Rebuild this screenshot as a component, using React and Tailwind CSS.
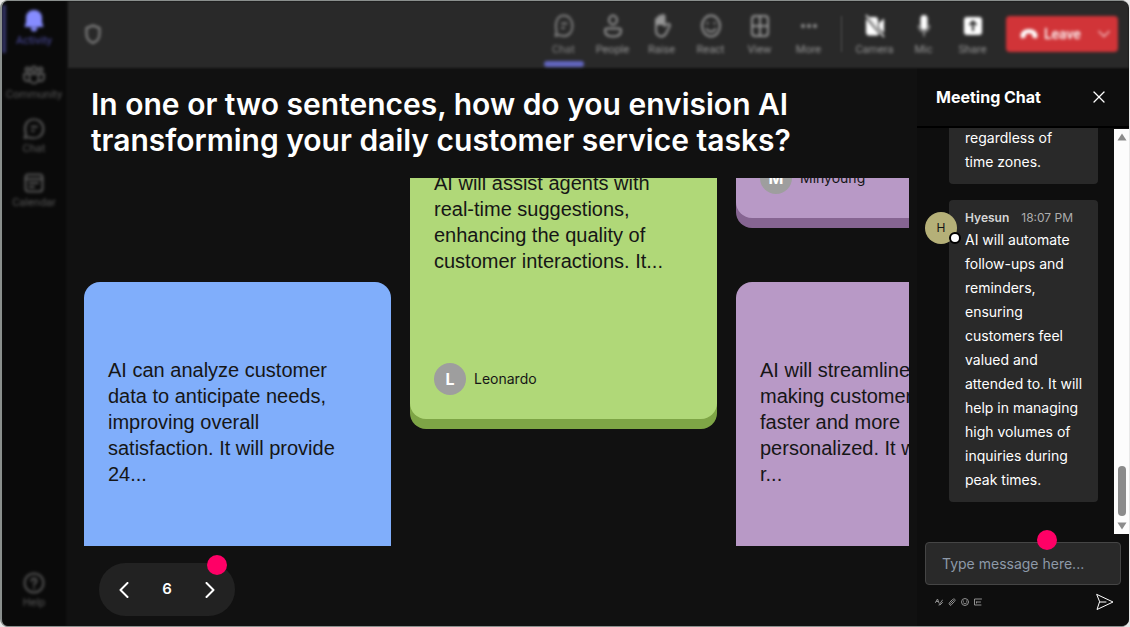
import React, { useState } from 'react';
import { ChevronDown, X } from 'lucide-react';

const answers = [
  {
    id: 'left',
    className: 'pt-[104px]',
    cards: [
      {
        name: 'Daniel',
        text: 'AI can analyze customer data to anticipate needs, improving overall satisfaction. It will provide 24...',
        color: 'bg-[#80aefb] shadow-[0_10px_0_#4f7fd0]',
      },
    ],
  },
  {
    id: 'middle',
    className: '-mt-24',
    cards: [
      {
        name: 'Leonardo',
        text: 'AI will assist agents with real-time suggestions, enhancing the quality of customer interactions. It...',
        color: 'bg-[#b0d878] shadow-[0_10px_0_#7ea546]',
      },
    ],
  },
  {
    id: 'right',
    className: '-mt-[297px]',
    cards: [
      {
        name: 'Minyoung',
        text: 'AI will take over\nrepetitive work.',
        color: 'bg-[#b899c6] shadow-[0_10px_0_#866592]',
      },
      {
        name: 'Sofia',
        text: 'AI will streamline tasks,\nmaking customer service\nfaster and more\npersonalized. It will\nr...',
        color: 'bg-[#b899c6] shadow-[0_10px_0_#866592]',
      },
    ],
  },
];

const iconProps = {
  fill: 'none',
  stroke: 'currentColor',
  strokeWidth: 2,
  strokeLinecap: 'round',
  strokeLinejoin: 'round',
  'aria-hidden': true,
};

const BellIcon = () => (
  <svg viewBox="0 0 20 22" className="h-[22px] w-5" fill="currentColor" aria-hidden="true">
    <path d="M10 0C5.500 0 2 3.200 2 7.500V12L.500 17H19.500L18 12V7.500C18 3.200 14.500 0 10 0Z" />
    <path d="M6.500 17.500H13.500C13 20.500 12 21.500 10 21.500C8 21.500 7 20.500 6.500 17.500Z" />
  </svg>
);

const CommunityIcon = () => (
  <svg viewBox="0 0 22 20" className="h-5 w-[22px]" {...iconProps}>
    <circle cx="11" cy="4" r="2.500" />
    <circle cx="4.500" cy="4.500" r="2" />
    <circle cx="17.500" cy="4.500" r="2" />
    <path d="M6.500 9H15.500V14C15.500 19.500 6.500 19.500 6.500 14ZM6 9H1V12.500C1 15 3 16.500 5.500 16M16 9H21V12.500C21 15 19 16.500 16.500 16" />
  </svg>
);

const BubbleIcon = ({ className }) => (
  <svg viewBox="0 0 20 24" preserveAspectRatio="none" className={className} {...iconProps}>
    <path d="M10 1.500C15 1.500 18.500 6 18.500 12S15 22 10 22C8 22 6.500 21.600 5 20.800L1.500 22L2.600 17.500C.500 9 3 1.500 10 1.500Z" />
    <path d="M8 9.500H12.500M8 14H10" />
  </svg>
);

const CalendarIcon = () => (
  <svg viewBox="0 0 20 20" className="h-5 w-5" {...iconProps}>
    <rect x="1.500" y="1.500" width="17" height="17" rx="3" />
    <path d="M1.500 6H18.500M5.500 10H14M5.500 14H10" />
  </svg>
);

const HelpIcon = () => (
  <svg viewBox="0 0 22 22" className="h-[22px] w-[22px]" {...iconProps}>
    <circle cx="11" cy="11" r="9.500" />
    <path d="M8.500 9C8.500 5.500 13.500 5.500 13.500 9C13.500 11 11 11 11 13M11 16V16.200" />
  </svg>
);

const PersonIcon = () => (
  <svg viewBox="0 0 20 24" className="h-6 w-5" {...iconProps}>
    <ellipse cx="10" cy="6" rx="4" ry="4.500" />
    <path d="M4 14.500H16C17.500 14.500 18 15.500 18 16.500C18 20.500 14.500 22.500 10 22.500S2 20.500 2 16.500C2 15.500 2.500 14.500 4 14.500Z" />
  </svg>
);

const HandIcon = () => (
  <svg viewBox="0 0 20 24" className="h-6 w-5" {...iconProps}>
    <path d="M4 13V6C4 4 6.500 4 6.500 6V10V3.500C6.500 1.500 9.500 1.500 9.500 3.500V10V2.500C9.500 .500 12.500 .500 12.500 2.500V12L15.500 10C17 9 18.500 11 17.500 12.500L14 19.500C11.500 24 4 23.500 4 16Z" />
    <path d="M4.500 5L12 3V10H4.500Z" fill="currentColor" />
  </svg>
);

const SmileIcon = () => (
  <svg viewBox="0 0 20 24" className="h-6 w-5" {...iconProps}>
    <ellipse cx="10" cy="12" rx="9" ry="10.500" />
    <path d="M6.500 9V9.500M13.500 9V9.500M5.500 15C8 18.500 12 18.500 14.500 15" />
  </svg>
);

const GridIcon = () => (
  <svg viewBox="0 0 20 24" className="h-6 w-5" {...iconProps}>
    <rect x="2" y="2" width="16" height="20" rx="3" />
    <path d="M10 2V22M2 12H18" />
  </svg>
);

const DotsIcon = () => (
  <svg viewBox="0 0 20 24" className="h-6 w-5" fill="currentColor" aria-hidden="true">
    <circle cx="4" cy="12" r="2" />
    <circle cx="10" cy="12" r="2" />
    <circle cx="16" cy="12" r="2" />
  </svg>
);

const CameraIcon = () => (
  <svg viewBox="0 0 20 24" className="h-6 w-5 text-white" fill="currentColor" aria-hidden="true">
    <path d="M4 3H10C12 3 13 4 13 6V14ZM1 4.500L14 20C13.500 21 12.500 21.500 11 21.500H4C2 21.500 1 20 1 18ZM14 9L19 4.500V19L14 14Z" />
    <path d="M1 1L19 23" stroke="currentColor" strokeWidth="1.500" />
  </svg>
);

const MicIcon = () => (
  <svg viewBox="0 0 20 24" className="h-6 w-5 text-white" fill="currentColor" aria-hidden="true">
    <rect x="6.500" y="1" width="7" height="15" rx="3.500" />
    <path d="M4.500 11C4.500 20 15.500 20 15.500 11M10 18V22.500" fill="none" stroke="#a3a3a3" strokeWidth="1.500" />
  </svg>
);

const ShareIcon = () => (
  <svg viewBox="0 0 20 24" className="h-6 w-5 text-white" aria-hidden="true">
    <rect x="1" y="3" width="18" height="18" rx="3" fill="currentColor" />
    <path d="M10 17V8M6.500 11L10 7.500L13.500 11" fill="none" stroke="#292929" strokeWidth="2" />
  </svg>
);

const sideItems = [
  { label: 'Activity', icon: <BellIcon /> },
  { label: 'Community', icon: <CommunityIcon /> },
  { label: 'Chat', icon: <BubbleIcon className="h-[22px] w-[22px]" /> },
  { label: 'Calendar', icon: <CalendarIcon /> },
];

const meetingItems = [
  { label: 'Chat', icon: <BubbleIcon className="h-6 w-5" /> },
  { label: 'People', icon: <PersonIcon /> },
  { label: 'Raise', icon: <HandIcon /> },
  { label: 'React', icon: <SmileIcon /> },
  { label: 'View', icon: <GridIcon /> },
  { label: 'More', icon: <DotsIcon /> },
];

const deviceItems = [
  { label: 'Camera', icon: <CameraIcon /> },
  { label: 'Mic', icon: <MicIcon /> },
  { label: 'Share', icon: <ShareIcon /> },
];

const SideItem = ({ label, icon, active }) => (
  <button
    type="button"
    className={`flex h-12 w-full flex-col items-center border-l-4 pt-1 pr-1 text-[11px] leading-4 blur-[1px] ${
      active ? 'border-[#343468] text-[#4c4ca0]' : 'border-transparent text-[#585858]'
    }`}
  >
    <span className={`flex h-6 items-center ${active ? 'text-[#868cff]' : ''}`}>{icon}</span>
    {label}
  </button>
);

const Sidebar = () => (
  <nav
    aria-label="Main"
    className="flex w-16 shrink-0 flex-col justify-between bg-[#0a0a0a] pt-1 pb-[11px] font-['Roboto',sans-serif] blur-[1px]"
  >
    <div className="flex flex-col gap-1.5">
      {sideItems.map((item, index) => (
        <SideItem key={item.label} {...item} active={index === 0} />
      ))}
    </div>
    <SideItem label="Help" icon={<HelpIcon />} />
  </nav>
);

const ToolButton = ({ label, icon, active }) => (
  <button
    type="button"
    className={`flex w-[49px] flex-col items-center pt-[13px] text-[11px] leading-4 blur-[1px] ${
      active ? 'text-[#808080]' : 'text-[#969696]'
    }`}
  >
    {icon}
    <span className="mt-1">{label}</span>
    <span className={`mt-auto h-1.5 w-10 rounded-sm ${active ? 'bg-[#6266c0]' : ''}`} />
  </button>
);

const TopBar = () => (
  <header className="flex h-[67px] shrink-0 items-center justify-between bg-[#292929] pr-[11px] pb-px pl-[17px] font-['Roboto',sans-serif] blur-[1px]">
    <svg viewBox="0 0 16 20" className="h-5 w-4 text-[#888888] blur-[1px]" {...iconProps}>
      <path d="M8 1.500L14.500 4V10C14.500 14.500 12 17.500 8 19C4 17.500 1.500 14.500 1.500 10V4Z" />
    </svg>
    <div className="flex h-full items-center">
      <div className="flex h-full">
        {meetingItems.map((item, index) => (
          <ToolButton key={item.label} {...item} active={index === 0} />
        ))}
      </div>
      <span className="mx-2 h-9 w-px bg-[#4c4c4c]" />
      <div className="flex h-full">
        {deviceItems.map((item) => (
          <ToolButton key={item.label} {...item} />
        ))}
      </div>
      <button
        type="button"
        className="ml-[9px] flex h-9 w-28 items-center rounded bg-[#d13438] pr-1 pl-3.5 text-sm font-medium text-white blur-[1px]"
      >
        <svg viewBox="0 0 18 12" className="mr-1.5 h-3 w-[18px]" fill="currentColor" aria-hidden="true">
          <path d="M9 1C4 1 0 4 .500 8.500L1.500 10.500L5.500 9.500L6 6C8 5.300 10 5.300 12 6L12.500 9.500L16.500 10.500L17.500 8.500C18 4 14 1 9 1Z" />
        </svg>
        Leave
        <ChevronDown className="ml-auto h-5 w-5 text-[#f0b8ba]" />
      </button>
    </div>
  </header>
);

const AnswerCard = ({ name, text, color }) => (
  <article className={`flex h-[337px] flex-col rounded-2xl px-6 pb-6 text-[#161616] ${color}`}>
    <p className="flex flex-1 items-center pb-0.5 font-['Liberation_Sans',sans-serif] text-xl leading-[26px] whitespace-pre-line">
      {text}
    </p>
    <div className="flex items-center gap-2 text-sm">
      <span className="flex h-8 w-8 items-center justify-center rounded-full bg-[#9e9e9e] text-base font-bold text-white">
        {name[0]}
      </span>
      {name}
    </div>
  </article>
);

const Pager = () => {
  const [page, setPage] = useState(6);

  return (
    <div className="relative mt-[17px] mb-2.5 ml-[31px] flex h-[53px] w-[136px] items-center justify-between rounded-full bg-[#222222] px-5 text-white">
      <button type="button" aria-label="Previous" onClick={() => setPage((prev) => Math.max(1, prev - 1))}>
        <svg viewBox="0 0 10 16" className="h-4 w-2.5" {...iconProps}>
          <path d="M8.500 1L1.500 8L8.500 15" />
        </svg>
      </button>
      <span className="text-[15px] font-semibold">{page}</span>
      <button type="button" aria-label="Next" onClick={() => setPage((prev) => prev + 1)}>
        <svg viewBox="0 0 10 16" className="h-4 w-2.5" {...iconProps}>
          <path d="M1.500 1L8.500 8L1.500 15" />
        </svg>
      </button>
      <span className="absolute -top-2 right-2 h-5 w-5 rounded-full bg-[#ff0066]" />
    </div>
  );
};

const Board = () => (
  <main className="flex min-w-0 flex-1 flex-col pt-[18px]">
    <h1 className="mb-5 pl-[23px] text-[30px] leading-9 font-semibold text-white">
      In one or two sentences, how do you envision AI
      <br />
      transforming your daily customer service tasks?
    </h1>
    <div className="mr-2 ml-4 flex min-h-0 flex-1 items-start gap-[19px] overflow-hidden">
      {answers.map((column) => (
        <div key={column.id} className={`flex w-[307px] shrink-0 flex-col gap-16 ${column.className}`}>
          {column.cards.map((card) => (
            <AnswerCard key={card.name} {...card} />
          ))}
        </div>
      ))}
    </div>
    <Pager />
  </main>
);

const ScrollTrack = () => (
  <div className="mt-px flex w-[15px] shrink-0 flex-col items-center bg-[#fcfcfc] py-1" aria-hidden="true">
    <svg viewBox="0 0 10 8" className="h-2 w-2.5" fill="#8b8b8b">
      <path d="M5 0.500L9.500 7.500H.500Z" />
    </svg>
    <span className="mt-auto mb-1.5 h-[50px] w-2 rounded-full bg-[#8b8b8b]" />
    <svg viewBox="0 0 10 8" className="h-2 w-2.5" fill="#8b8b8b">
      <path d="M5 7.500L9.500 0.500H.500Z" />
    </svg>
  </div>
);

const Message = ({ name, time, text }) => (
  <li className="flex items-start">
    <span className="relative z-10 mt-3 -mr-2 flex h-8 w-8 shrink-0 items-center justify-center rounded-full bg-[#b5b078] text-xs text-[#161616]">
      {name[0]}
      <span className="absolute -right-1 bottom-0 h-3 w-3 rounded-full border-2 border-black bg-white" />
    </span>
    <div className="min-w-0 flex-1 rounded bg-[#292929] pt-2 pr-3 pb-2.5 pl-4">
      <div className="flex gap-3 text-xs leading-5 whitespace-nowrap text-[#adadad]">
        <span className="font-semibold text-[#d6d6d6]">{name}</span>
        <time>{time}</time>
      </div>
      <p className="text-sm leading-6 whitespace-pre-line text-white">{text}</p>
    </div>
  </li>
);

const ChatPanel = () => {
  const [draft, setDraft] = useState('');

  return (
    <aside className="flex w-[212px] shrink-0 flex-col bg-[#0e0e0e] text-white">
      <div className="flex h-[60px] shrink-0 items-center justify-between border-b-2 border-black pr-5 pl-[19px]">
        <h2 className="text-base font-bold">Meeting Chat</h2>
        <button type="button" aria-label="Close chat">
          <X className="h-5 w-5" strokeWidth={1.5} />
        </button>
      </div>
      <div className="flex min-h-0 flex-1">
        <ul className="flex min-w-0 flex-1 flex-col justify-end gap-4 overflow-hidden pr-4 pb-8 pl-2">
          <Message name="Minji" time="18:05 PM" text={'AI will help us\nregardless of\ntime zones.'} />
          <Message
            name="Hyesun"
            time="18:07 PM"
            text="AI will automate follow-ups and reminders, ensuring customers feel valued and attended to. It will help in managing high volumes of inquiries during peak times."
          />
        </ul>
        <ScrollTrack />
      </div>
      <form className="shrink-0 px-2 pt-2 pb-[15px]" onSubmit={(event) => event.preventDefault()}>
        <div className="relative">
          <input
            type="text"
            aria-label="Message"
            placeholder="Type message here..."
            value={draft}
            onChange={(event) => setDraft(event.target.value)}
            className="block h-[43px] w-full rounded border border-[#454545] bg-[#292929] px-4 text-sm text-white placeholder:text-[#8d99a8]"
          />
          <span className="absolute -top-3 right-16 h-5 w-5 rounded-full bg-[#ff0066]" />
        </div>
        <div className="mt-2 flex items-center justify-between pr-[7px] pl-2.5">
          <div className="flex gap-[5px] text-[#909090]">
            <button type="button" aria-label="Format">
              <svg viewBox="0 0 16 16" className="h-2 w-2" {...iconProps}>
                <path d="M1 9L5 2L8 10M3 7H6M8 14L15 4M10 14L15 9" />
              </svg>
            </button>
            <button type="button" aria-label="Attach">
              <svg viewBox="0 0 16 16" className="h-2 w-2" {...iconProps}>
                <path d="M5 11L11 5M4 14C1 12 2 10 4 8L9 3C13 0 16 4 13 7L8 12C7 14 5 15 4 14Z" />
              </svg>
            </button>
            <button type="button" aria-label="Emoji">
              <svg viewBox="0 0 16 16" className="h-2 w-2" {...iconProps}>
                <circle cx="8" cy="8" r="7" />
                <path d="M5 6V6.500M11 6V6.500M5 10C7 12 9 12 11 10" />
              </svg>
            </button>
            <button type="button" aria-label="GIF">
              <svg viewBox="0 0 16 16" className="h-2 w-2" {...iconProps}>
                <path d="M15 2H1V14H14M5 8H13M5 8V10" />
              </svg>
            </button>
          </div>
          <button type="submit" aria-label="Send">
            <svg viewBox="0 0 18 18" className="h-[18px] w-[18px]" {...iconProps} strokeWidth={1}>
              <path d="M1 1.500L17 9L1 16.500L3.500 9ZM3.500 9H10" />
            </svg>
          </button>
        </div>
      </form>
    </aside>
  );
};

const App = () => {
  return (
    <div className="h-screen bg-[#e8e8e8] pr-px font-['Inter',sans-serif]">
      <div className="flex h-full gap-0.5 overflow-hidden rounded-lg border-y border-l-2 border-[#8a8f8d] bg-[#111111]">
        <Sidebar />
        <div className="flex min-w-0 flex-1 flex-col">
          <TopBar />
          <div className="flex min-h-0 flex-1">
            <Board />
            <ChatPanel />
          </div>
        </div>
      </div>
    </div>
  );
};

export default App;
